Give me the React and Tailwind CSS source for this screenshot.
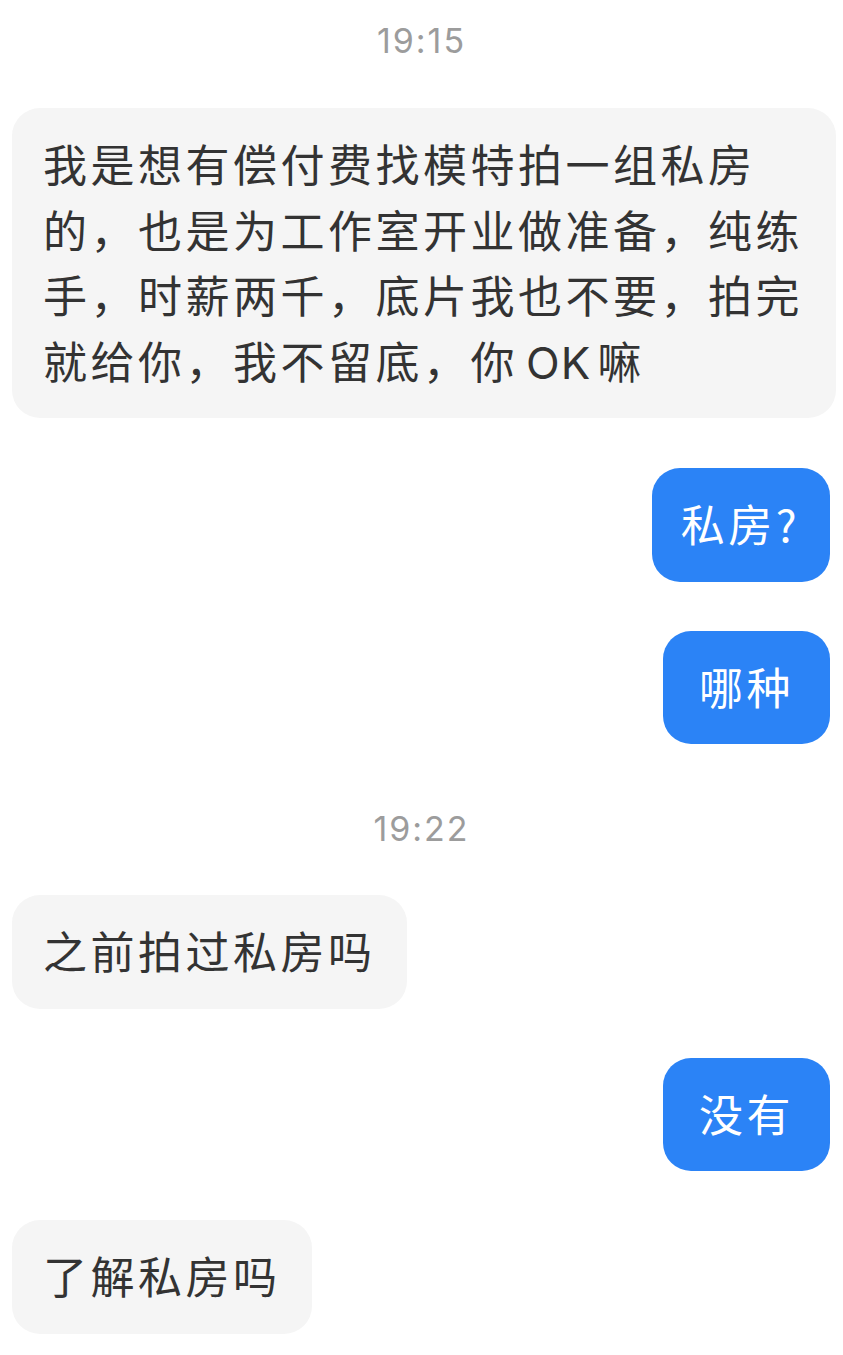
const CJK = { fontFamily: '"Noto Sans CJK SC", "Noto Sans", sans-serif' };
const TIME = { fontFamily: 'Inter, "Liberation Sans", sans-serif' };
const LATIN = { fontFamily: 'Inter, "Noto Sans CJK SC", sans-serif' };

function Time({ children, className = "" }) {
  return (
    <div
      className={`self-center h-[33px] text-[34px] leading-[33px] tracking-[2px] text-[#9c9c9c] ${className}`}
      style={TIME}
    >
      {children}
    </div>
  );
}

function Left({ children, className = "" }) {
  return (
    <div
      className={`self-start ml-[12px] rounded-[28px] bg-[#f5f5f5] pl-[31px] pr-[31px] pt-[23px] pb-[25px] text-[44px] leading-[65.5px] tracking-[3.5px] text-[#333333] whitespace-nowrap ${className}`}
    >
      {children}
    </div>
  );
}

function Right({ children, className = "px-[36px]" }) {
  return (
    <div
      className={`self-end mr-[13px] rounded-[28px] bg-[#2b83f6] pt-[23px] pb-[25px] text-[44px] leading-[65.5px] tracking-[3.5px] text-white whitespace-nowrap ${className}`}
    >
      {children}
    </div>
  );
}

export default function App() {
  return (
    <div className="min-h-[1355px] bg-white pt-[24px] flex flex-col" style={CJK}>
      <Time>19:15</Time>
      <Left className="mt-[51px] w-[824px]">
        <div className="h-[65.5px]">我是想有偿付费找模特拍一组私房</div>
        <div className="h-[65.5px]">的，也是为工作室开业做准备，纯练</div>
        <div className="h-[65.5px]">手，时薪两千，底片我也不要，拍完</div>
        <div className="h-[65.5px]">
          就给你，我不留底，你
          <span className="ml-[8px] mr-[6px] tracking-[1px] leading-none" style={LATIN}>
            OK
          </span>
          嘛
        </div>
      </Left>
      <Right className="mt-[50px] pl-[29px] pr-[30px]">私房?</Right>
      <Right className="mt-[49px] px-[36px]">哪种</Right>
      <Time className="mt-[68px]">19:22</Time>
      <Left className="mt-[50px]">之前拍过私房吗</Left>
      <Right className="mt-[49px] px-[36px]">没有</Right>
      <Left className="mt-[49px]">了解私房吗</Left>
    </div>
  );
}
